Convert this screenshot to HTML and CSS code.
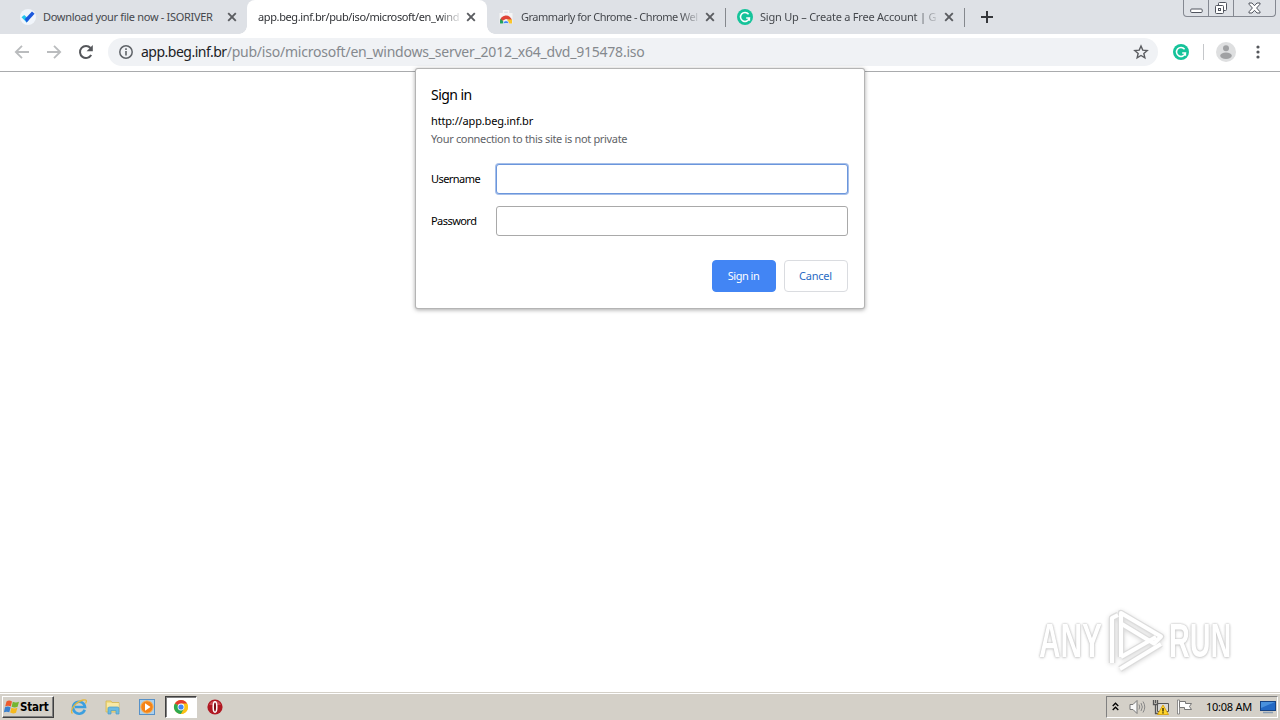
FILE: index.html
```
<!DOCTYPE html>
<html lang="en">
<head>
  <meta charset="UTF-8">
  <meta name="viewport" content="width=device-width, initial-scale=1.0">
  <title>app.beg.inf.br</title>
  <link rel="stylesheet" href="styles.css">
</head>
<body>
  <svg class="defs" width="0" height="0">
    <symbol id="close" viewBox="0 0 10 10"><path d="M1.2 1.2l7.6 7.6M8.8 1.2L1.2 8.8" stroke="#5a5c60" stroke-width="1.9"/></symbol>
    <symbol id="grammarly" viewBox="0 0 16 16">
      <circle cx="8" cy="8" r="8" fill="#15c39a"/>
      <path d="M11.6 5.2A4.5 4.5 0 1 0 12.4 9H9.2M12.4 9v2.8" fill="none" stroke="#fff" stroke-width="1.5"/>
    </symbol>
    <symbol id="chrome" viewBox="0 0 16 16">
      <circle cx="8" cy="8" r="7" fill="#fbc116"/>
      <path d="M8 8L1.9 4.5A7 7 0 0 1 14.1 4.5z" fill="#e33b2e"/>
      <path d="M8 8L1.9 4.5A7 7 0 0 0 8 15l3-5z" fill="#2da94f"/>
      <path d="M8 4.6h6.1A7 7 0 0 1 8 15l3-5z" fill="#fbc116"/>
      <circle cx="8" cy="8" r="3.4" fill="#fff"/>
      <circle cx="8" cy="8" r="2.6" fill="#4285f4"/>
    </symbol>
  </svg>

  <header class="tabstrip">
    <div class="tab tab-first">
      <svg class="favicon" width="16" height="16" viewBox="0 0 16 16">
        <circle cx="8" cy="8" r="8" fill="#f1f5fb"/>
        <path d="M1.500 8.200l2.700-2.300 2.600 2.400 2 2.600-2.200 2.600z" fill="#22c5ee"/>
        <path d="M6.600 13.500L4.900 10 12 2.600l2.600 2.200z" fill="#1c58dc"/>
      </svg>
      <span class="tab-title t1">Download your file now - ISORIVER</span>
      <svg class="close" width="10" height="10"><use href="#close"/></svg>
    </div>
    <div class="tab tab-active">
      <span class="tab-title t2">app.beg.inf.br/pub/iso/microsoft/en_wind</span>
      <svg class="close" width="10" height="10"><use href="#close"/></svg>
    </div>
    <div class="tab">
      <svg class="favicon" width="16" height="16" viewBox="0 0 16 16">
        <path d="M5.500 4V1.800h5V4" fill="none" stroke="#f5f5f5" stroke-width="1.400"/>
        <path d="M1.500 4h13v10.500h-13z" fill="#f4f4f5"/>
        <path d="M2 13a6 6 0 0 1 12-1L8 10z" fill="#df4437"/>
        <path d="M2 13a6 6 0 0 1 .8-3.200L7 14.500H2z" fill="#20a35a"/>
        <path d="M9.500 10.500H14V14.500H9z" fill="#fbc52c"/>
        <path d="M5.200 14.500a2.800 2.800 0 0 1 5.600 0z" fill="#4285f4" stroke="#fff" stroke-width=".6"/>
      </svg>
      <span class="tab-title t3">Grammarly for Chrome - Chrome Wel</span>
      <svg class="close" width="10" height="10"><use href="#close"/></svg>
    </div>
    <div class="tab tab-divided">
      <svg class="favicon" width="16" height="16"><use href="#grammarly"/></svg>
      <span class="tab-title t4">Sign Up – Create a Free Account | G</span>
      <svg class="close" width="10" height="10"><use href="#close"/></svg>
    </div>
    <div class="new-tab">
      <svg width="12" height="12" viewBox="0 0 12 12"><path d="M6 0v12M0 6h12" stroke="#35373b" stroke-width="2"/></svg>
    </div>
    <div class="window-buttons">
      <span class="minimize"><svg width="13" height="6" viewBox="0 0 13 6"><rect x=".7" y="1" width="11.500" height="3.500" rx="1" fill="#fff" stroke="#50545e"/></svg></span>
      <span class="restore"><svg width="14" height="14" viewBox="0 0 14 14"><rect x="4.500" y="1.500" width="8" height="8" rx="1" fill="#fff" stroke="#50545e"/><rect x="1.500" y="4.500" width="8" height="8" rx="1" fill="#fff" stroke="#50545e"/><rect x="4.500" y="7.500" width="2" height="2" fill="#fff" stroke="#50545e"/></svg></span>
      <span class="exit"><svg width="13" height="12" viewBox="0 0 13 12"><path d="M1 1h3l2.500 2.700L9 1h3v1.200L8.600 6l3.400 3.800V11H9L6.500 8.300 4 11H1V9.800L4.400 6 1 2.200z" fill="#fff" stroke="#50545e"/></svg></span>
    </div>
  </header>

  <nav class="toolbar">
    <svg class="nav-icon" width="16" height="16" viewBox="0 0 16 16"><path d="M15 8H2M8 1.800L1.800 8 8 14.200" fill="none" stroke="#babcbe" stroke-width="1.800"/></svg>
    <svg class="nav-icon" width="16" height="16" viewBox="0 0 16 16"><path d="M1 8h13M8 1.800L14.200 8 8 14.200" fill="none" stroke="#babcbe" stroke-width="1.800"/></svg>
    <svg class="nav-icon" width="16" height="16" viewBox="0 0 16 16"><path d="M13.200 11A6 6 0 1 1 12.500 4" fill="none" stroke="#55575b" stroke-width="2"/><path d="M14.800 1v6.200H8.600z" fill="#55575b"/></svg>
    <div class="omnibox">
      <svg width="14" height="14" viewBox="0 0 14 14"><circle cx="7" cy="7" r="6.200" fill="none" stroke="#5f6368" stroke-width="1.500"/><path d="M7 6v4.500M7 3.300V5" stroke="#5f6368" stroke-width="1.600"/></svg>
      <span class="url"><b>app.beg.inf.br</b><span class="path">/pub/iso/microsoft/en_windows_server_2012_x64_dvd_915478.iso</span></span>
      <svg class="star" width="16" height="16" viewBox="0 0 16 16"><path d="M8 2l1.750 4.100 4.450.400-3.350 2.950 1 4.350L8 11.500l-3.850 2.300 1-4.350L1.800 6.500l4.450-.400z" fill="none" stroke="#5a5c60" stroke-width="1.400"/></svg>
    </div>
    <svg class="extension" width="16" height="16"><use href="#grammarly"/></svg>
    <i class="separator"></i>
    <svg class="avatar" width="20" height="20" viewBox="0 0 20 20"><circle cx="10" cy="10" r="10" fill="#dedfe0"/><circle cx="10" cy="6.200" r="3" fill="#a0a1a3"/><ellipse cx="10" cy="13.800" rx="5.800" ry="3.200" fill="#a0a1a3"/></svg>
    <svg class="menu" width="4" height="14" viewBox="0 0 4 14"><circle cx="2" cy="2" r="1.600"/><circle cx="2" cy="7" r="1.600"/><circle cx="2" cy="12" r="1.600"/></svg>
  </nav>

  <main class="page">
    <form class="dialog">
      <h1>Sign in</h1>
      <p class="origin">http://app.beg.inf.br</p>
      <p class="warning">Your connection to this site is not private</p>
      <label class="field"><span class="label">Username</span><input class="focused" type="text"></label>
      <label class="field"><span class="label">Password</span><input type="password"></label>
      <div class="actions">
        <button type="button" class="btn btn-primary">Sign in</button>
        <button type="button" class="btn">Cancel</button>
      </div>
    </form>

    <div class="watermark">
      <span class="any">ANY</span>
      <svg width="58" height="62" viewBox="0 0 58 62">
        <g fill="none" stroke-linejoin="round">
          <path class="edge" d="M6 53V8l6-3"/>
          <path class="edge" d="M15 47V3l40 23.500-7 7L15 13.500"/>
          <path class="edge" d="M15 47l35-20M14 59l41-25"/>
          <path class="line" d="M6 53V8l6-3"/>
          <path class="line" d="M15 47V3l40 23.500-7 7L15 13.500"/>
          <path class="line" d="M15 47l35-20M14 59l41-25"/>
        </g>
      </svg>
      <span class="run">RUN</span>
    </div>
  </main>

  <footer class="taskbar">
    <div class="start">
      <svg width="16" height="16" viewBox="0 0 16 16">
        <path d="M2.500 2.500Q5 .500 8 2.500L6.800 7.500Q4 6 1.200 7.500z" fill="#ed5b2d"/>
        <path d="M8.800 2.800q3 1.600 6.200 0l-1.400 5q-3 1.500-6-.100z" fill="#74b52f"/>
        <path d="M1 8.300Q4 6.900 6.600 8.400L5.300 13.300Q2.700 12-.100 13.300z" fill="#3a80ce"/>
        <path d="M7.400 8.700q3 1.500 6 .100l-1.400 4.900q-3 1.500-5.800-.100z" fill="#f6b91d"/>
      </svg>
      <span>Start</span>
    </div>
    <div class="launchers">
      <span class="launcher"><svg width="18" height="18" viewBox="0 0 18 18">
        <path d="M14.700 11.800A6 6 0 1 1 15 9H5" fill="none" stroke="#3c9fdf" stroke-width="2.600"/>
        <path d="M2.500 15.500C-1 13 5 4 13 2c4-.8 4 1 2.500 3.500" fill="none" stroke="#e5b83e" stroke-width="1.300"/>
      </svg></span>
      <span class="launcher"><svg width="18" height="18" viewBox="0 0 18 18">
        <path d="M2 3h5l1 1.500h7V14H2z" fill="#f1dc83" stroke="#d4b650" stroke-width=".8"/>
        <path d="M3 6h12M3 8h12" stroke="#fff6c7"/>
        <path d="M4 16V10.500q0-1.500 1.500-1.500h8q1.500 0 1.500 1.500V16h-3v-3.500H7V16z" fill="#6bbbe2" stroke="#4b9cc7" stroke-width=".7"/>
      </svg></span>
      <span class="launcher"><svg width="18" height="18" viewBox="0 0 18 18">
        <rect x="1.500" y="1.500" width="15" height="15" fill="#abd0ed" stroke="#5791c8"/>
        <circle cx="9" cy="9" r="6.200" fill="#f58316" stroke="#f8b45d"/>
        <path d="M7 5.200L12.500 9 7 12.800z" fill="#fff"/>
      </svg></span>
      <span class="launcher launcher-active"><svg width="16" height="16"><use href="#chrome"/></svg></span>
      <span class="launcher"><svg width="16" height="16" viewBox="0 0 16 16"><circle cx="8" cy="8" r="7.600" fill="#b01822"/><path d="M2 6a6.500 6.500 0 0 1 12 0z" fill="#cc4a53"/><ellipse cx="8" cy="8" rx="1.800" ry="5.200" fill="#7c0d15" stroke="#fff" stroke-width="1.500"/></svg></span>
    </div>
    <div class="tray">
      <svg class="chevrons" width="7" height="9" viewBox="0 0 7 9"><path d="M.700 4L3.500 1.200 6.300 4M.700 8l2.800-2.800L6.300 8" fill="none" stroke="#000" stroke-width="1.300"/></svg>
      <svg class="volume" width="17" height="16" viewBox="0 0 17 16"><path d="M1 5.500h3L8 1.500v13L4 10.500H1z" fill="#f8f8f8" stroke="#777"/><path d="M10 5.500q1.500 2.500 0 5M12 4q2.700 4 0 8M14 2.500q3.500 5.500 0 11" fill="none" stroke="#888"/></svg>
      <svg class="network" width="18" height="16" viewBox="0 0 18 16"><path d="M5.500 4.500h11v8h-11z" fill="#d8d8d6" stroke="#555"/><path d="M1.500 1v4.500h4V1M3.500 1v3M3.500 5.500v9h4" fill="none" stroke="#555" stroke-width="1.300"/><path d="M11 6l5.500 9.500h-11z" fill="#ffd52b" stroke="#d69b00" stroke-width=".8"/><path d="M11 9v3.500M11 13.300v1.200" stroke="#332800" stroke-width="1.400"/></svg>
      <svg class="flag" width="17" height="16" viewBox="0 0 17 16"><path d="M1.500 1h2v14h-2z" fill="#fff" stroke="#777" stroke-width=".8"/><path d="M3.500 2.500h6v2h6l-2 3 2 3h-7v-2h-5z" fill="#fff" stroke="#777"/></svg>
      <span class="clock">10:08 AM</span>
      <svg class="desktop" width="16" height="14" viewBox="0 0 16 14"><rect x=".500" y="1.500" width="15" height="9" fill="#2469c4" stroke="#174384"/><path d="M1 2h14L1 8z" fill="#4a91dd"/><path d="M3 12.500h10" stroke="#8a9db2" stroke-width="1.500"/></svg>
    </div>
  </footer>
</body>
</html>
```
FILE: styles.css
```
:root {
  --frame: #dee1e6;
  --bar: #d4d0c8;
  --blue: #4285f4;
}

* {
  margin: 0;
  padding: 0;
  box-sizing: border-box;
}

body {
  width: 1280px;
  height: 720px;
  overflow: hidden;
  display: flex;
  flex-direction: column;
  background: #fff;
  color: #000;
  font-family: "Noto Sans", "Open Sans", sans-serif;
  font-size: 11px;
  letter-spacing: -0.33px;
}

svg {
  display: block;
  flex: none;
}

.defs {
  position: absolute;
}

/* Tabs */
.tabstrip {
  height: 34px;
  flex: none;
  display: flex;
  background: var(--frame);
}

.tab {
  width: 239px;
  padding: 0 11px;
  display: flex;
  align-items: center;
  color: #45484d;
}

.tab-first {
  width: 247px;
  padding: 0 10px 0 20px;
}

.tab-active {
  position: relative;
  width: 240px;
  background: #fff;
  border-radius: 8px 8px 0 0;
  color: #303236;
}

/* curved feet of the active tab */
.tab-active::before,
.tab-active::after {
  content: "";
  position: absolute;
  bottom: 0;
  left: -8px;
  width: 8px;
  height: 8px;
  background: radial-gradient(circle at 0 0, transparent 7.5px, #fff 8px);
}

.tab-active::after {
  left: 240px;
  background: radial-gradient(circle at 100% 0, transparent 7.5px, #fff 8px);
}

.tab-divided {
  position: relative;
}

.tab-divided::before,
.tab-divided::after {
  content: "";
  position: absolute;
  top: 8px;
  left: -1px;
  width: 1px;
  height: 19px;
  background: #85888d;
}

.tab-divided::after {
  left: 238px;
}

.favicon {
  margin-right: 7px;
}

.tab-title {
  white-space: nowrap;
  line-height: 18px;
}

.close {
  margin-left: auto;
}

.t1 {
  letter-spacing: -0.31px;
}

.t2,
.t3,
.t4 {
  -webkit-mask-image: linear-gradient(to right, #000 90%, transparent 102%);
  mask-image: linear-gradient(to right, #000 90%, transparent 102%);
}

.t2 {
  letter-spacing: -0.38px;
}

.t3 {
  letter-spacing: -0.48px;
}

.t4 {
  letter-spacing: -0.22px;
}

.new-tab {
  width: 44px;
  display: flex;
  align-items: center;
  justify-content: center;
}

.window-buttons {
  width: 93px;
  height: 17px;
  margin: 0 4px 0 auto;
  display: flex;
  border: 1px solid #848891;
  border-top: 0;
  border-radius: 0 0 4px 4px;
}

.window-buttons span {
  width: 25px;
  display: flex;
  align-items: center;
  justify-content: center;
  border-right: 1px solid #848891;
}

.window-buttons .minimize {
  padding-top: 5px;
}

.window-buttons .exit {
  width: 41px;
  border: 0;
}

/* Toolbar */
.toolbar {
  height: 38px;
  flex: none;
  padding: 4px 20px 0 14px;
  display: flex;
  background: #fff;
  border-bottom: 1px solid #a9abad;
}

.nav-icon {
  margin: 6px 16px 0 0;
}

.omnibox {
  width: 1050px;
  height: 28px;
  margin-left: -2px;
  padding: 0 9px 0 11px;
  display: flex;
  align-items: center;
  border-radius: 14px;
  background: #f0f2f5;
}

.url {
  flex: 1;
  margin: 0 0 2px 8px;
  font-size: 14px;
  white-space: nowrap;
}

.url b {
  font-weight: 400;
  letter-spacing: -0.5px;
  color: #202124;
}

.path {
  letter-spacing: -0.22px;
  color: #85898e;
}

.extension {
  margin: 6px 0 0 15px;
}

.separator {
  width: 1px;
  height: 16px;
  margin: 6px 0 0 14px;
  background: #c5c7ca;
}

.avatar {
  margin: 4px 0 0 12px;
}

.menu {
  margin: 7px 0 0 auto;
  fill: #55575b;
}

/* Page and sign-in prompt */
.page {
  position: relative;
  flex: 1;
}

.dialog {
  position: absolute;
  top: -3px;
  left: 416px;
  width: 448px;
  height: 239px;
  padding: 16px 16px 0 15px;
  background: #fff;
  border-radius: 2px;
  box-shadow: 0 0 0 1px #b4b4b4, 0 1px 4px 1px rgba(0, 0, 0, 0.35);
}

.dialog h1 {
  height: 20px;
  line-height: 20px;
  font-size: 14px;
  font-weight: 400;
  letter-spacing: -0.55px;
}

.dialog p {
  height: 18px;
  line-height: 18px;
  margin-top: 7px;
}

.dialog .origin {
  letter-spacing: -0.16px;
}

.dialog .warning {
  margin: 0 0 16px;
  color: #5f6368;
}

.field {
  height: 30px;
  margin-bottom: 12px;
  display: flex;
  align-items: center;
}

.label {
  width: 65px;
  margin-bottom: 2px;
  letter-spacing: -0.55px;
}

.field input {
  width: 352px;
  height: 30px;
  border: 1px solid #a9a9a9;
  border-radius: 3px;
  outline: none;
}

.field .focused {
  border-color: #6b96dc;
  box-shadow: 0 0 0 1px #a6bfe9;
}

.actions {
  margin-top: 24px;
  display: flex;
  justify-content: flex-end;
  gap: 8px;
}

.btn {
  width: 64px;
  height: 32px;
  padding: 0 1px 2px 0;
  border: 1px solid #dadce0;
  border-radius: 4px;
  background: #fff;
  color: #2a6bc4;
  font: inherit;
  letter-spacing: -0.2px;
}

.btn-primary {
  border-color: var(--blue);
  background: var(--blue);
  color: #fff;
  letter-spacing: -0.5px;
}

.watermark {
  position: absolute;
  left: 1039px;
  top: 538px;
  display: flex;
  align-items: center;
  color: #fff;
  font: bold 48px/62px "Liberation Sans", sans-serif;
  letter-spacing: 0;
  text-shadow: 0 0 2px #bdbdbd, 0 0 3px #cfcfcf, 0 1px 4px #d8d8d8;
}

.watermark span {
  width: 64px;
  transform: scaleX(0.62);
  transform-origin: left;
}

.watermark .run {
  transform: scaleX(0.6);
}

.watermark svg {
  margin: 0 5px 0 3px;
  overflow: visible;
  filter: drop-shadow(0 1px 2px #d8d8d8);
}

.edge {
  stroke: #dcdcdc;
  stroke-width: 6.5px;
}

.line {
  stroke: #fff;
  stroke-width: 4px;
}

/* Taskbar */
.taskbar {
  height: 28px;
  flex: none;
  padding: 3px 2px 1px 2px;
  display: flex;
  background: var(--bar);
  border-top: 1px solid #d4d0c8;
  box-shadow: inset 0 1px 0 #fff;
}

.start {
  width: 52px;
  height: 22px;
  padding-left: 1px;
  display: flex;
  align-items: center;
  border: 1px solid;
  border-color: #fff #404040 #404040 #fff;
  box-shadow: inset -1px -1px 0 #808080;
  font: bold 11.5px "DejaVu Sans Condensed", "Noto Sans", sans-serif;
  letter-spacing: -0.2px;
}

.launchers {
  margin-left: 8px;
  display: flex;
}

.launcher {
  width: 34px;
  height: 22px;
  display: flex;
  align-items: center;
  justify-content: center;
}

.launcher-active {
  width: 32px;
  margin: 0 1px;
  background: #fff;
  border: 1px solid;
  border-color: #404040 #fff #fff #404040;
  box-shadow: inset 1px 1px 0 #808080;
}

.tray {
  width: 172px;
  height: 22px;
  margin-left: auto;
  padding-left: 5px;
  display: flex;
  align-items: center;
  border: 1px solid;
  border-color: #808080 #fff #fff #808080;
}

.chevrons {
  margin-bottom: 2px;
}

.volume {
  margin-left: 10px;
}

.network {
  margin-left: 6px;
}

.flag {
  margin-left: 6px;
}

.clock {
  width: 48px;
  margin: 0 0 1px 13px;
  letter-spacing: -0.25px;
  white-space: nowrap;
}

.desktop {
  margin-left: 6px;
}
```
